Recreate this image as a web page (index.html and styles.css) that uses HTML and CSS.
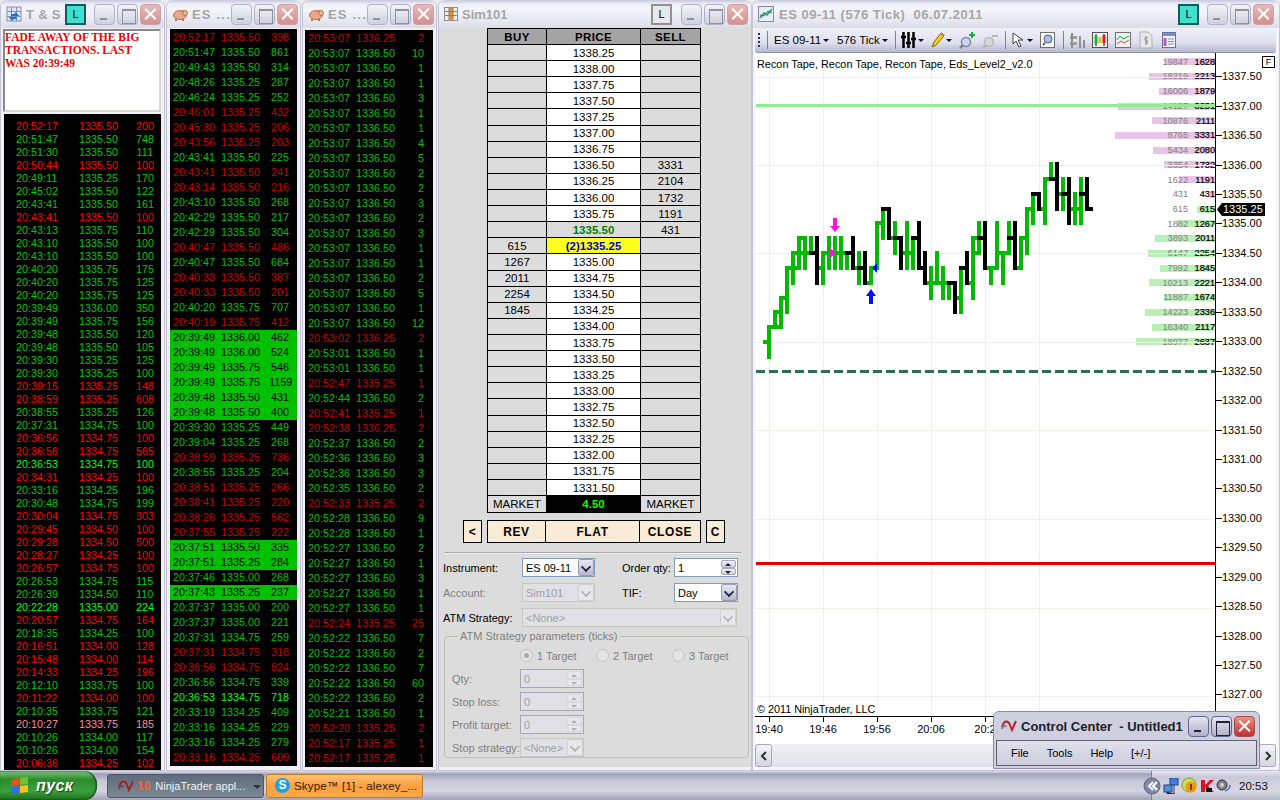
FILE: index.html
```html
<!DOCTYPE html>
<html lang="en">
<head>
<meta charset="utf-8">
<title>NinjaTrader workspace</title>
<link rel="stylesheet" href="styles.css">
</head>
<body>
<main class="desktop">

<section class="win w1">
  <header class="tbar">
    <svg class="wicon" viewBox="0 0 16 16"><rect x="1" y="1" width="14" height="14" fill="#dfe6f4" stroke="#8090b8"/><path d="M1 5.500H15M1 10.500H15M5.500 1V15M10.500 1V15" stroke="#8090b8"/><path d="M5 9H11L9 7M11 12H5L7 14" stroke="#2070e0" stroke-width="2" fill="none"/></svg>
    <span class="ttl tsn">T &amp; S</span>
    <span class="lbtn cy">L</span>
    <span class="wbs"><i class="bt mn"></i><i class="bt mx"></i><i class="bt cl"></i></span>
  </header>
  <div class="memo">FADE AWAY OF THE BIG TRANSACTIONS. LAST WAS 20:39:49</div>
  <div class="tape t1">
    <p class="r"><b>20:52:17</b><b>1335.50</b><b>200</b></p>
    <p class="g"><b>20:51:47</b><b>1335.50</b><b>748</b></p>
    <p class="g"><b>20:51:30</b><b>1335.50</b><b>111</b></p>
    <p class="r"><b>20:50:44</b><b>1335.50</b><b>100</b></p>
    <p class="g"><b>20:49:11</b><b>1335.25</b><b>170</b></p>
    <p class="g"><b>20:45:02</b><b>1335.50</b><b>122</b></p>
    <p class="g"><b>20:43:41</b><b>1335.50</b><b>161</b></p>
    <p class="r"><b>20:43:41</b><b>1335.50</b><b>100</b></p>
    <p class="g"><b>20:43:13</b><b>1335.75</b><b>110</b></p>
    <p class="g"><b>20:43:10</b><b>1335.50</b><b>100</b></p>
    <p class="g"><b>20:43:10</b><b>1335.50</b><b>100</b></p>
    <p class="g"><b>20:40:20</b><b>1335.75</b><b>175</b></p>
    <p class="g"><b>20:40:20</b><b>1335.75</b><b>125</b></p>
    <p class="g"><b>20:40:20</b><b>1335.75</b><b>125</b></p>
    <p class="g"><b>20:39:49</b><b>1336.00</b><b>350</b></p>
    <p class="g"><b>20:39:49</b><b>1335.75</b><b>156</b></p>
    <p class="g"><b>20:39:48</b><b>1335.50</b><b>120</b></p>
    <p class="g"><b>20:39:48</b><b>1335.50</b><b>105</b></p>
    <p class="g"><b>20:39:30</b><b>1335.25</b><b>125</b></p>
    <p class="g"><b>20:39:30</b><b>1335.25</b><b>100</b></p>
    <p class="r"><b>20:39:15</b><b>1335.25</b><b>148</b></p>
    <p class="r"><b>20:38:59</b><b>1335.25</b><b>608</b></p>
    <p class="g"><b>20:38:55</b><b>1335.25</b><b>126</b></p>
    <p class="g"><b>20:37:31</b><b>1334.75</b><b>100</b></p>
    <p class="r"><b>20:36:56</b><b>1334.75</b><b>100</b></p>
    <p class="r"><b>20:36:56</b><b>1334.75</b><b>565</b></p>
    <p class="lg"><b>20:36:53</b><b>1334.75</b><b>100</b></p>
    <p class="r"><b>20:34:31</b><b>1334.25</b><b>100</b></p>
    <p class="g"><b>20:33:16</b><b>1334.25</b><b>196</b></p>
    <p class="g"><b>20:30:48</b><b>1334.75</b><b>199</b></p>
    <p class="r"><b>20:30:04</b><b>1334.75</b><b>303</b></p>
    <p class="r"><b>20:29:45</b><b>1334.50</b><b>100</b></p>
    <p class="r"><b>20:29:28</b><b>1334.50</b><b>500</b></p>
    <p class="r"><b>20:28:27</b><b>1334.25</b><b>100</b></p>
    <p class="r"><b>20:26:57</b><b>1334.75</b><b>100</b></p>
    <p class="g"><b>20:26:53</b><b>1334.75</b><b>115</b></p>
    <p class="g"><b>20:26:39</b><b>1334.50</b><b>110</b></p>
    <p class="lg"><b>20:22:28</b><b>1335.00</b><b>224</b></p>
    <p class="r"><b>20:20:57</b><b>1334.75</b><b>164</b></p>
    <p class="g"><b>20:18:35</b><b>1334.25</b><b>100</b></p>
    <p class="r"><b>20:16:51</b><b>1334.00</b><b>128</b></p>
    <p class="r"><b>20:15:48</b><b>1334.00</b><b>114</b></p>
    <p class="r"><b>20:14:33</b><b>1334.25</b><b>196</b></p>
    <p class="g"><b>20:12:10</b><b>1333.75</b><b>100</b></p>
    <p class="r"><b>20:11:22</b><b>1334.00</b><b>100</b></p>
    <p class="g"><b>20:10:35</b><b>1333.75</b><b>121</b></p>
    <p class="pk"><b>20:10:27</b><b>1333.75</b><b>185</b></p>
    <p class="g"><b>20:10:26</b><b>1334.00</b><b>117</b></p>
    <p class="g"><b>20:10:26</b><b>1334.00</b><b>154</b></p>
    <p class="r"><b>20:06:36</b><b>1334.25</b><b>102</b></p>
  </div>
</section>

<section class="win w2">
  <header class="tbar">
    <svg class="wicon" viewBox="0 0 16 16"><ellipse cx="8" cy="9" rx="6.500" ry="4.500" fill="#e8a888" stroke="#b87858"/><circle cx="13" cy="7" r="2.500" fill="#f0b898" stroke="#b87858"/><path d="M4 13V15M11 13V15" stroke="#b87858" stroke-width="2"/><path d="M10 4L12 6" stroke="#c06040"/></svg>
    <span class="ttl">ES ...</span>
    <span class="wbs"><i class="bt mn"></i><i class="bt mx"></i><i class="bt cl"></i></span>
  </header>
  <div class="tape t2">
    <p class="r"><b>20:52:17</b><b>1335.50</b><b>398</b></p>
    <p class="g"><b>20:51:47</b><b>1335.50</b><b>861</b></p>
    <p class="g"><b>20:49:43</b><b>1335.50</b><b>314</b></p>
    <p class="g"><b>20:48:26</b><b>1335.25</b><b>287</b></p>
    <p class="g"><b>20:46:24</b><b>1335.25</b><b>252</b></p>
    <p class="r"><b>20:46:01</b><b>1335.25</b><b>432</b></p>
    <p class="r"><b>20:45:30</b><b>1335.25</b><b>206</b></p>
    <p class="r"><b>20:43:56</b><b>1335.25</b><b>203</b></p>
    <p class="g"><b>20:43:41</b><b>1335.50</b><b>225</b></p>
    <p class="r"><b>20:43:41</b><b>1335.50</b><b>241</b></p>
    <p class="r"><b>20:43:14</b><b>1335.50</b><b>216</b></p>
    <p class="g"><b>20:43:10</b><b>1335.50</b><b>268</b></p>
    <p class="g"><b>20:42:29</b><b>1335.50</b><b>217</b></p>
    <p class="g"><b>20:42:29</b><b>1335.50</b><b>304</b></p>
    <p class="r"><b>20:40:47</b><b>1335.50</b><b>486</b></p>
    <p class="g"><b>20:40:47</b><b>1335.50</b><b>684</b></p>
    <p class="r"><b>20:40:33</b><b>1335.50</b><b>387</b></p>
    <p class="r"><b>20:40:33</b><b>1335.50</b><b>201</b></p>
    <p class="g"><b>20:40:20</b><b>1335.75</b><b>707</b></p>
    <p class="r"><b>20:40:19</b><b>1335.75</b><b>412</b></p>
    <p class="hl"><b>20:39:49</b><b>1336.00</b><b>462</b></p>
    <p class="hl"><b>20:39:49</b><b>1336.00</b><b>524</b></p>
    <p class="hl"><b>20:39:49</b><b>1335.75</b><b>546</b></p>
    <p class="hl"><b>20:39:49</b><b>1335.75</b><b>1159</b></p>
    <p class="hl"><b>20:39:48</b><b>1335.50</b><b>431</b></p>
    <p class="hl"><b>20:39:48</b><b>1335.50</b><b>400</b></p>
    <p class="g"><b>20:39:30</b><b>1335.25</b><b>449</b></p>
    <p class="g"><b>20:39:04</b><b>1335.25</b><b>268</b></p>
    <p class="r"><b>20:38:59</b><b>1335.25</b><b>736</b></p>
    <p class="g"><b>20:38:55</b><b>1335.25</b><b>204</b></p>
    <p class="r"><b>20:38:51</b><b>1335.25</b><b>266</b></p>
    <p class="r"><b>20:38:41</b><b>1335.25</b><b>220</b></p>
    <p class="r"><b>20:38:26</b><b>1335.25</b><b>562</b></p>
    <p class="r"><b>20:37:55</b><b>1335.25</b><b>222</b></p>
    <p class="hl"><b>20:37:51</b><b>1335.50</b><b>335</b></p>
    <p class="hl"><b>20:37:51</b><b>1335.25</b><b>284</b></p>
    <p class="g"><b>20:37:46</b><b>1335.00</b><b>268</b></p>
    <p class="hl"><b>20:37:43</b><b>1335.25</b><b>237</b></p>
    <p class="g"><b>20:37:37</b><b>1335.00</b><b>200</b></p>
    <p class="g"><b>20:37:37</b><b>1335.00</b><b>221</b></p>
    <p class="g"><b>20:37:31</b><b>1334.75</b><b>259</b></p>
    <p class="r"><b>20:37:31</b><b>1334.75</b><b>318</b></p>
    <p class="r"><b>20:36:56</b><b>1334.75</b><b>824</b></p>
    <p class="g"><b>20:36:56</b><b>1334.75</b><b>339</b></p>
    <p class="lg"><b>20:36:53</b><b>1334.75</b><b>718</b></p>
    <p class="g"><b>20:33:19</b><b>1334.25</b><b>409</b></p>
    <p class="g"><b>20:33:16</b><b>1334.25</b><b>229</b></p>
    <p class="g"><b>20:33:16</b><b>1334.25</b><b>279</b></p>
    <p class="r"><b>20:33:16</b><b>1334.25</b><b>609</b></p>
  </div>
</section>

<section class="win w3">
  <header class="tbar">
    <svg class="wicon" viewBox="0 0 16 16"><ellipse cx="8" cy="9" rx="6.500" ry="4.500" fill="#e8a888" stroke="#b87858"/><circle cx="13" cy="7" r="2.500" fill="#f0b898" stroke="#b87858"/><path d="M4 13V15M11 13V15" stroke="#b87858" stroke-width="2"/><path d="M10 4L12 6" stroke="#c06040"/></svg>
    <span class="ttl">ES ...</span>
    <span class="wbs"><i class="bt mn"></i><i class="bt mx"></i><i class="bt cl"></i></span>
  </header>
  <div class="tape t3">
    <p class="r"><b>20:53:07</b><b>1336.25</b><b>2</b></p>
    <p class="g"><b>20:53:07</b><b>1336.50</b><b>10</b></p>
    <p class="g"><b>20:53:07</b><b>1336.50</b><b>1</b></p>
    <p class="g"><b>20:53:07</b><b>1336.50</b><b>1</b></p>
    <p class="g"><b>20:53:07</b><b>1336.50</b><b>3</b></p>
    <p class="g"><b>20:53:07</b><b>1336.50</b><b>1</b></p>
    <p class="g"><b>20:53:07</b><b>1336.50</b><b>1</b></p>
    <p class="g"><b>20:53:07</b><b>1336.50</b><b>4</b></p>
    <p class="g"><b>20:53:07</b><b>1336.50</b><b>5</b></p>
    <p class="g"><b>20:53:07</b><b>1336.50</b><b>2</b></p>
    <p class="g"><b>20:53:07</b><b>1336.50</b><b>2</b></p>
    <p class="g"><b>20:53:07</b><b>1336.50</b><b>3</b></p>
    <p class="g"><b>20:53:07</b><b>1336.50</b><b>2</b></p>
    <p class="g"><b>20:53:07</b><b>1336.50</b><b>3</b></p>
    <p class="g"><b>20:53:07</b><b>1336.50</b><b>1</b></p>
    <p class="g"><b>20:53:07</b><b>1336.50</b><b>1</b></p>
    <p class="g"><b>20:53:07</b><b>1336.50</b><b>2</b></p>
    <p class="g"><b>20:53:07</b><b>1336.50</b><b>5</b></p>
    <p class="g"><b>20:53:07</b><b>1336.50</b><b>1</b></p>
    <p class="g"><b>20:53:07</b><b>1336.50</b><b>12</b></p>
    <p class="r"><b>20:53:02</b><b>1336.25</b><b>2</b></p>
    <p class="g"><b>20:53:01</b><b>1336.50</b><b>1</b></p>
    <p class="g"><b>20:53:01</b><b>1336.50</b><b>1</b></p>
    <p class="r"><b>20:52:47</b><b>1335.25</b><b>1</b></p>
    <p class="g"><b>20:52:44</b><b>1336.50</b><b>2</b></p>
    <p class="r"><b>20:52:41</b><b>1335.25</b><b>1</b></p>
    <p class="r"><b>20:52:38</b><b>1336.25</b><b>2</b></p>
    <p class="g"><b>20:52:37</b><b>1336.50</b><b>2</b></p>
    <p class="g"><b>20:52:36</b><b>1336.50</b><b>3</b></p>
    <p class="g"><b>20:52:36</b><b>1336.50</b><b>3</b></p>
    <p class="g"><b>20:52:35</b><b>1336.50</b><b>2</b></p>
    <p class="r"><b>20:52:33</b><b>1335.25</b><b>2</b></p>
    <p class="g"><b>20:52:28</b><b>1336.50</b><b>9</b></p>
    <p class="g"><b>20:52:28</b><b>1336.50</b><b>1</b></p>
    <p class="g"><b>20:52:27</b><b>1336.50</b><b>2</b></p>
    <p class="g"><b>20:52:27</b><b>1336.50</b><b>1</b></p>
    <p class="g"><b>20:52:27</b><b>1336.50</b><b>3</b></p>
    <p class="g"><b>20:52:27</b><b>1336.50</b><b>1</b></p>
    <p class="g"><b>20:52:27</b><b>1336.50</b><b>1</b></p>
    <p class="r"><b>20:52:24</b><b>1335.25</b><b>25</b></p>
    <p class="g"><b>20:52:22</b><b>1336.50</b><b>7</b></p>
    <p class="g"><b>20:52:22</b><b>1336.50</b><b>2</b></p>
    <p class="g"><b>20:52:22</b><b>1336.50</b><b>7</b></p>
    <p class="g"><b>20:52:22</b><b>1336.50</b><b>60</b></p>
    <p class="g"><b>20:52:22</b><b>1336.50</b><b>2</b></p>
    <p class="g"><b>20:52:21</b><b>1336.50</b><b>1</b></p>
    <p class="r"><b>20:52:20</b><b>1335.25</b><b>2</b></p>
    <p class="r"><b>20:52:17</b><b>1335.25</b><b>1</b></p>
    <p class="r"><b>20:52:17</b><b>1335.25</b><b>1</b></p>
  </div>
</section>

<section class="win w4">
  <header class="tbar">
    <svg class="wicon sim" viewBox="0 0 14 14"><rect x="0.500" y="0.500" width="13" height="13" fill="#eee" stroke="#909090"/><rect x="5" y="1" width="4" height="12" fill="#f09020"/><path d="M1 4.500H13M1 8.500H13M5 1V13M9 1V13" stroke="#808080"/></svg>
    <span class="ttl simt">Sim101</span>
    <span class="lbtn gy">L</span>
    <span class="wbs"><i class="bt mn"></i><i class="bt mx"></i><i class="bt cl"></i></span>
  </header>
  <div class="dombody">
    <div class="dom">
      <div class="hd">BUY</div><div class="hd">PRICE</div><div class="hd">SELL</div>
      <div></div><div class="p">1338.25</div><div></div>
      <div></div><div class="p">1338.00</div><div></div>
      <div></div><div class="p">1337.75</div><div></div>
      <div></div><div class="p">1337.50</div><div></div>
      <div></div><div class="p">1337.25</div><div></div>
      <div></div><div class="p">1337.00</div><div></div>
      <div></div><div class="p">1336.75</div><div></div>
      <div></div><div class="p">1336.50</div><div>3331</div>
      <div></div><div class="p">1336.25</div><div>2104</div>
      <div></div><div class="p">1336.00</div><div>1732</div>
      <div></div><div class="p">1335.75</div><div>1191</div>
      <div></div><div class="p last">1335.50</div><div>431</div>
      <div>615</div><div class="p cur">(2)1335.25</div><div></div>
      <div>1267</div><div class="p">1335.00</div><div></div>
      <div>2011</div><div class="p">1334.75</div><div></div>
      <div>2254</div><div class="p">1334.50</div><div></div>
      <div>1845</div><div class="p">1334.25</div><div></div>
      <div></div><div class="p">1334.00</div><div></div>
      <div></div><div class="p">1333.75</div><div></div>
      <div></div><div class="p">1333.50</div><div></div>
      <div></div><div class="p">1333.25</div><div></div>
      <div></div><div class="p">1333.00</div><div></div>
      <div></div><div class="p">1332.75</div><div></div>
      <div></div><div class="p">1332.50</div><div></div>
      <div></div><div class="p">1332.25</div><div></div>
      <div></div><div class="p">1332.00</div><div></div>
      <div></div><div class="p">1331.75</div><div></div>
      <div></div><div class="p">1331.50</div><div></div>
      <div class="mk">MARKET</div><div class="pnl">4.50</div><div class="mk">MARKET</div>
    </div>
    <div class="actions">
      <span class="act sm">&lt;</span>
      <div class="actg"><span class="act">REV</span><span class="act">FLAT</span><span class="act">CLOSE</span></div>
      <span class="act sm">C</span>
    </div>
    <hr class="sep">
    <div class="frow">
      <label class="l1">Instrument:</label>
      <span class="combo act-c c1"><em>ES 09-11</em><i class="dd"></i></span>
      <label class="l2">Order qty:</label>
      <span class="spin on s1"><em>1</em><i class="sb"><u></u><u class="dn"></u></i></span>
    </div>
    <div class="frow">
      <label class="l1 off">Account:</label>
      <span class="combo dis c1"><em>Sim101</em><i class="dd"></i></span>
      <label class="l2">TIF:</label>
      <span class="combo act-c s1"><em>Day</em><i class="dd"></i></span>
    </div>
    <div class="frow">
      <label class="l1">ATM Strategy:</label>
      <span class="combo dis c3"><em>&lt;None&gt;</em><i class="dd"></i></span>
    </div>
    <fieldset class="grp">
      <legend>ATM Strategy parameters (ticks)</legend>
      <div class="radios">
        <span class="rad"><i class="dot chk"></i>1 Target</span>
        <span class="rad"><i class="dot"></i>2 Target</span>
        <span class="rad"><i class="dot"></i>3 Target</span>
      </div>
      <div class="prow"><label>Qty:</label><span class="spin dis s2"><em>0</em><i class="sb"><u></u><u class="dn"></u></i></span></div>
      <div class="prow"><label>Stop loss:</label><span class="spin dis s2"><em>0</em><i class="sb"><u></u><u class="dn"></u></i></span></div>
      <div class="prow"><label>Profit target:</label><span class="spin dis s2"><em>0</em><i class="sb"><u></u><u class="dn"></u></i></span></div>
      <div class="prow"><label>Stop strategy:</label><span class="combo dis s2"><em>&lt;None&gt;</em><i class="dd"></i></span></div>
    </fieldset>
  </div>
</section>

<section class="win w5">
  <header class="tbar">
    <svg class="wicon" viewBox="0 0 16 16"><rect x="0.500" y="0.500" width="15" height="15" fill="#e8ecf8" stroke="#8888a8"/><path d="M2 12L6 7L9 9L14 3" stroke="#20a040" stroke-width="1.500" fill="none"/><path d="M2 9L6 10L10 5L14 7" stroke="#2060e0" fill="none"/></svg>
    <span class="ttl cht">ES 09-11 (576 Tick)&nbsp; 06.07.2011</span>
    <span class="lbtn cy">L</span>
    <span class="wbs"><i class="bt mn"></i><i class="bt mx"></i><i class="bt cl"></i></span>
  </header>
  <nav class="tools">
    <i class="grip m3"></i><i class="vs m7"></i>
    <span class="ti t-a m6">ES 09-11</span><i class="ar m7"></i>
    <span class="ti t-b m8">576 Tick</span><i class="ar m5"></i><i class="vs m7"></i>
    <svg class="ic m5" width="15" height="18" viewBox="0 0 15 18"><path d="M2.500 1V17M7.500 1V17M12.500 1V17M0 6H5M5 12H10M10 8H15" stroke="#000" stroke-width="2.500" fill="none"/></svg><i class="ar m2"></i>
    <svg class="ic m7" width="14" height="18" viewBox="0 0 14 18"><path d="M1 16L3 11L10 2L13 5L5 14Z" fill="#f0d020" stroke="#806000"/><path d="M10 2L13 5" stroke="#e06060" stroke-width="2"/></svg><i class="ar m1"></i>
    <svg class="ic m7" width="17" height="18" viewBox="0 0 17 18"><circle cx="7" cy="11" r="4.500" fill="#c8d4f0" stroke="#808890" stroke-width="1.500"/><path d="M4 14L1 17" stroke="#808890" stroke-width="3"/><path d="M13 1V7M10 4H16" stroke="#10b030" stroke-width="2"/></svg>
    <svg class="ic m6" width="16" height="18" viewBox="0 0 16 18"><circle cx="7" cy="11" r="4.500" fill="#d8d8d8" stroke="#b8b8b8" stroke-width="1.500"/><path d="M4 14L1 17" stroke="#b8b8b8" stroke-width="3"/><path d="M10 5H16" stroke="#b8b8b8" stroke-width="2"/></svg><i class="vs m7"></i>
    <svg class="ic m6" width="13" height="18" viewBox="0 0 13 18"><path d="M1 2V13L4 10L7 16L9 15L6 9L11 9Z" fill="#fff" stroke="#404040"/></svg><i class="ar m2"></i>
    <svg class="ic m7" width="15" height="18" viewBox="0 0 15 18"><rect x="0.500" y="1.500" width="14" height="15" fill="#f8f8f8" stroke="#707070"/><circle cx="8" cy="8" r="4" fill="#a0c0f0" stroke="#606060"/><path d="M5 12L3 14" stroke="#606060" stroke-width="2"/></svg><i class="vs m8"></i>
    <svg class="ic m5" width="16" height="18" viewBox="0 0 16 18"><path d="M1 5H8V8H1ZM1 11H8V14H1Z" fill="#a0a0a0"/><path d="M3 2V17M11 5V17M15 9V17" stroke="#909090" stroke-width="2"/></svg>
    <svg class="ic m7" width="16" height="18" viewBox="0 0 16 18"><rect x="0.500" y="1.500" width="15" height="15" fill="#f0f0f0" stroke="#505050"/><path d="M4 3V15M12 3V15" stroke="#101010"/><rect x="2.500" y="5" width="3" height="8" fill="#20b040"/><rect x="10.500" y="4" width="3" height="8" fill="#e02020"/><rect x="6.500" y="6" width="3" height="6" fill="#e0c020"/></svg>
    <svg class="ic m7" width="16" height="18" viewBox="0 0 16 18"><rect x="0.500" y="1.500" width="15" height="15" fill="#f0f0f0" stroke="#707070"/><path d="M2 9L5 5L8 8L14 5" stroke="#20a040" fill="none"/><path d="M2 13L6 10L9 12L14 9" stroke="#e04040" fill="none"/></svg>
    <svg class="ic m8" width="14" height="18" viewBox="0 0 14 18"><path d="M1 1H9L13 5V17H1Z" fill="#e8e8e8" stroke="#b0b0b0"/><path d="M9 7C6 6 5 9 7 9.500C9 10 9 13 6 12M7 5V14" stroke="#a0a0a0" stroke-width="1.500" fill="none"/></svg>
    <svg class="ic m9" width="14" height="18" viewBox="0 0 14 18"><rect x="0.500" y="1.500" width="13" height="15" fill="#f0f0ff" stroke="#7070a0"/><rect x="1" y="2" width="12" height="3" fill="#7090d0"/><path d="M3 7V15" stroke="#b060c0" stroke-width="3"/><path d="M6 8H12M6 10.500H12M6 13H12" stroke="#9090a0"/></svg>
  </nav>
  <div class="chart">
    <div class="plot">
      <div class="ladder">
        <div class="lr"><s class="ask" style="width:50px"></s><span>19847</span><b>1628</b></div>
        <div class="lr"><s class="ask" style="width:66px"></s><span>18219</span><b>2213</b></div>
        <div class="lr"><s class="ask" style="width:56px"></s><span>16006</span><b>1879</b></div>
        <div class="lr"><s class="ask" style="width:97px"></s><span>14127</span><b>3251</b></div>
        <div class="lr"><s class="ask" style="width:63px"></s><span>10876</span><b>2111</b></div>
        <div class="lr"><s class="ask" style="width:100px"></s><span>8765</span><b>3331</b></div>
        <div class="lr"><s class="ask" style="width:62px"></s><span>5434</span><b>2080</b></div>
        <div class="lr"><s class="ask" style="width:51px"></s><span>3354</span><b>1732</b></div>
        <div class="lr"><s class="ask" style="width:36px"></s><span>1622</span><b>1191</b></div>
        <div class="lr"><s class="ask" style="width:5px"></s><span>431</span><b>431</b></div>
        <div class="lr"><s class="bid" style="width:18px"></s><span>615</span><b>615</b></div>
        <div class="lr"><s class="bid" style="width:38px"></s><span>1882</span><b>1267</b></div>
        <div class="lr"><s class="bid" style="width:60px"></s><span>3893</span><b>2011</b></div>
        <div class="lr"><s class="bid" style="width:67px"></s><span>6147</span><b>2254</b></div>
        <div class="lr"><s class="bid" style="width:55px"></s><span>7992</span><b>1845</b></div>
        <div class="lr"><s class="bid" style="width:66px"></s><span>10213</span><b>2221</b></div>
        <div class="lr"><s class="bid" style="width:51px"></s><span>11887</span><b>1674</b></div>
        <div class="lr"><s class="bid" style="width:70px"></s><span>14223</span><b>2336</b></div>
        <div class="lr"><s class="bid" style="width:63px"></s><span>16340</span><b>2117</b></div>
        <div class="lr"><s class="bid" style="width:79px"></s><span>18977</span><b>2637</b></div>
      </div>
      <svg class="canvas" width="460" height="663" viewBox="0 0 460 663">
        <g class="grid" stroke="#f0f0e4">
          <path d="M0 24.500H460M0 112.500H460M0 200.500H460M0 289.500H460M0 377.500H460M0 466.500H460M0 555.500H460M0 643.500H460"/>
          <path d="M14.500 8V663M68.500 8V663M122.500 8V663M176.500 8V663M230.500 8V663M284.500 8V663"/>
        </g>
        <rect x="1" y="51" width="459" height="3" fill="#90ee90"/>
        <path d="M1 318.500H460" stroke="#2e6e50" stroke-width="3" stroke-dasharray="9 4"/>
        <rect x="1" y="509" width="459" height="3" fill="#e00000"/>
        <g transform="translate(-5 98) scale(.33333)" stroke-width="12" fill="none" stroke-linecap="square" shape-rendering="crispEdges">
          <path stroke="#00bb00" d="M57 528V617M75 484V528M93 440V528M111 350V484M129 306V395M147 262V350M165 262V350M183 262V306M219 306V395M237 262V350M255 262V350M273 262V350M291 306V350M327 306V395M363 350V395M381 217V350M399 173V262M435 217V306M471 217V350M489 262V350M543 350V440M561 306V395M579 350V440M597 395V440M633 350V484M669 262V440M687 217V306M723 350V395M741 217V350M759 306V395M777 217V306M813 262V350M831 173V306M849 128V217M885 84V217M903 40V84M939 84V173M975 128V217M993 84V217"/>
          <path stroke="#00bb00" d="M46 573H57M57 528H93M75 484H93M93 440H111M111 350H147M129 306H183M147 262H165M201 350H219M219 306H291M309 350H327M345 395H363M363 350H381M381 217H399M417 262H435M453 306H489M525 395H597M615 440H633M651 395H669M669 306H687M669 262H687M705 350H741M741 306H777M795 350H813M813 262H831M831 173H849M867 173H885M885 84H903M921 128H939M957 173H993"/>
          <path stroke="#000" d="M201 262V395M309 262V350M345 306V395M417 173V262M453 262V350M507 217V350M525 306V395M615 395V484M651 306V395M705 217V350M795 217V350M867 128V173M921 40V173M957 84V217M1011 84V173"/>
          <path stroke="#000" d="M183 306H201M291 306H309M327 350H345M399 173H417M435 262H453M489 262H507M507 350H525M597 395H615M633 350H651M687 262H705M777 262H795M849 128H867M903 84H921M939 128H957M993 128H1011M1011 173H1023"/>
        </g>
        <path d="M78 165H82V173H85L80 179L75 173H78Z" fill="#ff10e0"/>
        <path d="M114 251H118V243H121L116 236L111 243H114Z" fill="#0010ff"/>
        <path d="M75 195L81 200L75 205Z" fill="#ff10e0"/>
        <path d="M122 210L117 215L122 220Z" fill="#0010e0"/>
      </svg>
      <div class="ctitle">Recon Tape, Recon Tape, Recon Tape, Eds_Level2_v2.0</div>
      <div class="copy">© 2011 NinjaTrader, LLC</div>
    </div>
    <div class="yaxis">
      <span class="fbox">F</span>
      <div class="yl">1337.50</div><div class="yl">1337.00</div><div class="yl">1336.50</div><div class="yl">1336.00</div>
      <div class="yl">1335.50</div><div class="yl">1335.00</div><div class="yl">1334.50</div><div class="yl">1334.00</div>
      <div class="yl">1333.50</div><div class="yl">1333.00</div><div class="yl">1332.50</div><div class="yl">1332.00</div>
      <div class="yl">1331.50</div><div class="yl">1331.00</div><div class="yl">1330.50</div><div class="yl">1330.00</div>
      <div class="yl">1329.50</div><div class="yl">1329.00</div><div class="yl">1328.50</div><div class="yl">1328.00</div>
      <div class="yl">1327.50</div><div class="yl">1327.00</div>
      <span class="cur-flag">1335.25</span>
    </div>
  </div>
  <div class="xaxis"><span>19:40</span><span>19:46</span><span>19:56</span><span>20:06</span><span>20:2</span></div>
  <div class="hscroll"><span class="sb-l"><svg width="8" height="10" viewBox="0 0 8 10"><path d="M6 1L2 5L6 9" stroke="#303030" stroke-width="2" fill="none"/></svg></span><span class="sb-r"><svg width="8" height="10" viewBox="0 0 8 10"><path d="M2 1L6 5L2 9" stroke="#303030" stroke-width="2" fill="none"/></svg></span></div>
</section>

<section class="cc">
  <header class="cc-bar">
    <svg class="cc-ic" width="16" height="14" viewBox="0 0 16 14"><path d="M1 8C3 1 7 1 9 6L11 11L15 2" fill="none" stroke="#c02020" stroke-width="2"/><path d="M1 10C2 6 4 6 5 8" fill="none" stroke="#808080" stroke-width="2"/></svg>
    <span class="cc-t">Control Center&nbsp; - Untitled1</span>
    <span class="wbs"><i class="bt mn act-b"></i><i class="bt mx act-b"></i><i class="bt cl act-c2"></i></span>
  </header>
  <nav class="cc-menu"><span>File</span><span>Tools</span><span>Help</span><span>[+/-]</span></nav>
</section>

<footer class="taskbar">
  <span class="start">
    <svg width="20" height="20" viewBox="0 0 20 20"><path d="M2 4L9 2V9L1 10Z" fill="#e85020"/><path d="M10 2L18 1V8L10 9Z" fill="#70c030"/><path d="M1 11L9 10V17L2 18Z" fill="#3070e0"/><path d="M10 10L18 9V16L10 17Z" fill="#f8c020"/></svg>
    <em>пуск</em>
  </span>
  <span class="task nt">
    <svg width="16" height="14" viewBox="0 0 16 14"><path d="M1 8C3 1 7 1 9 6L11 11L15 2" fill="none" stroke="#a82020" stroke-width="2"/><path d="M1 10C2 6 4 6 5 8" fill="none" stroke="#505058" stroke-width="2"/></svg>
    <b>10</b><span>NinjaTrader appl...</span><i class="tri"></i>
  </span>
  <span class="task sk">
    <span class="skype">S</span><span>Skype™ [1] - alexey_...</span>
  </span>
  <span class="tray">
    <svg class="back" width="18" height="18" viewBox="0 0 18 18"><circle cx="9" cy="9" r="8" fill="#8088a8" stroke="#606480"/><path d="M10 5L6 9L10 13M14 5L10 9L14 13" stroke="#fff" stroke-width="2" fill="none"/></svg>
    <svg width="16" height="16" viewBox="0 0 16 16"><rect x="7" y="0" width="8" height="7" fill="#4080e0" stroke="#204080"/><rect x="1" y="7" width="8" height="7" fill="#5090e8" stroke="#204080"/><path d="M4 14V16H12M11 7V16" stroke="#404040"/></svg>
    <svg width="17" height="17" viewBox="0 0 17 17"><circle cx="8" cy="8" r="7" fill="#c8e060" stroke="#80a020"/><circle cx="10" cy="10" r="5.500" fill="#f09810"/><path d="M10 7V13" stroke="#402000" stroke-width="1.500"/></svg>
    <svg width="14" height="14" viewBox="0 0 14 14"><path d="M1 1H5V6L10 1H14L8 7L14 13H10L5 8V13H1Z" fill="#e01020"/><rect x="6" y="9" width="6" height="4" fill="#181818"/></svg>
    <svg width="16" height="16" viewBox="0 0 16 16"><circle cx="6" cy="7" r="5" fill="#808088" stroke="#303038"/><circle cx="6" cy="7" r="2" fill="#d0d0d8"/><path d="M9 13C12 12 14 10 14 7" stroke="#4070d0" fill="none" stroke-width="1.500"/></svg>
    <time>20:53</time>
  </span>
</footer>
</main>
</body>
</html>
```

FILE: styles.css
```css
* { box-sizing: border-box; }
html, body { margin: 0; padding: 0; }
body { width: 1280px; height: 800px; overflow: hidden; font-family: "Liberation Sans", Arial, sans-serif; font-size: 11px; color: #000; }
.desktop { position: relative; width: 1280px; height: 800px; background: #eaeaf2; overflow: hidden; }

/* windows */
.win { position: absolute; top: 0; height: 771px; display: flex; flex-direction: column; background: #f0f0f6; border: 1px solid #c4c4d4; border-top: 0; border-radius: 7px 7px 0 0; padding: 0 3px; }
.w1 { left: 0; width: 165px; }
.w2 { left: 166px; width: 135px; }
.w3 { left: 302px; width: 135px; }
.w4 { left: 438px; width: 314px; padding-bottom: 3px; }
.w5 { left: 752px; width: 528px; padding: 0 3px 3px 2px; background: #f4f4f8; }

.tbar { flex: none; height: 28px; display: flex; align-items: center; margin: 0 -3px; padding: 0 3px 0 5px; background: linear-gradient(#c8c8dc 0, #eeeef6 4px, #f4f4fa 10px, #e6e6f0 22px, #dcdce8 28px); border-radius: 7px 7px 0 0; }
.w2 .tbar, .w3 .tbar { padding-right: 5px; }
.w5 .tbar { margin: 0 -3px 0 -2px; padding-right: 5px; }
.wicon { width: 16px; height: 16px; flex: none; }
.ttl { margin-left: 4px; font-weight: bold; font-size: 13px; color: #a6a6a6; letter-spacing: 1.2px; white-space: nowrap; }
.tsn { letter-spacing: .3px; }
.simt { margin-left: 4px; font-size: 13px; letter-spacing: 0; }
.cht { font-size: 13px; margin-left: 5px; letter-spacing: .5px; }
.wicon.sim { width: 14px; height: 14px; }
.lbtn { flex: none; width: 21px; height: 21px; margin-left: auto; display: flex; align-items: center; justify-content: center; font-size: 11px; border: 2px solid; }
.lbtn.cy { background: #40e0d0; border-color: #0c5c5c; }
.lbtn.gy { background: #e8e8e8; border-color: #909090; margin-right: 9px; }
.w1 .lbtn, .w5 .lbtn { margin-right: 8px; }
.wbs { display: flex; gap: 2px; flex: none; }
.w2 .wbs, .w3 .wbs { margin-left: auto; }
.bt { position: relative; display: block; width: 21px; height: 21px; border: 1px solid #b0b0c8; border-radius: 4px; background: linear-gradient(#f4f4fa, #d0d0de); }
.bt.mn::after { content: ""; position: absolute; left: 5px; bottom: 4px; width: 7px; height: 2px; background: #9090a0; }
.bt.mx::after { content: ""; position: absolute; left: 4px; top: 4px; width: 12px; height: 12px; border: 1px solid #9090a0; border-top-width: 2px; }
.bt.cl { background: linear-gradient(#eab8b8, #d49090); border-color: #c8a0a8; }
.bt.cl::before, .bt.cl::after { content: ""; position: absolute; left: 2px; top: 8px; width: 15px; height: 2px; background: #fff; transform: rotate(45deg); }
.bt.cl::after { transform: rotate(-45deg); }

/* T&S tape */
.memo { flex: none; height: 83px; margin: 1px 0 0 -1px; padding: 0; background: #fff; border: 2px solid; border-color: #8a8a8a #d8d8d0 #d8d8d0 #8a8a8a; color: #f00000; font: bold 11.500px/13px "Liberation Serif", "Times New Roman", serif; }
.tape { flex: 1; min-height: 0; background: #000; }
.tape p { display: grid; margin: 0; white-space: nowrap; }
.tape b { font-weight: normal; font-size: 10.800px; }
.tape b:last-child { text-align: right; }
.t1 { margin-top: 2px; padding: 6px 8px 0 12px; }
.t1 p { grid-template-columns: 63px 57px 1fr; height: 13px; line-height: 13px; }
.t2 { margin: 1px 0 4px; padding: 1px 8px 0 3px; }
.t2 p { grid-template-columns: 48px 48px 1fr; height: 15px; line-height: 15px; margin: 0 -8px 0 -3px; padding: 0 8px 0 3px; }
.t3 { margin: 2px 0 3px -1px; padding: 1px 9px 0 3px; }
.t3 p { grid-template-columns: 48px 48px 1fr; height: 15px; line-height: 15px; }
.t1 .r { color: #ff0000; }
.t1 .g { color: #00c800; }
.t2 .r, .t3 .r { color: #c80000; }
.t2 .g, .t3 .g { color: #00c000; }
.lg { color: #00ff00; }
.pk { color: #ff9090; }
.hl { background: #00c000; color: #000; }

/* DOM */
.dombody { flex: 1; min-height: 0; background: #dcdcdc; margin: 0 -3px; padding: 0 3px; display: flex; flex-direction: column; }
.dom { flex: none; margin-left: 45px; width: 214px; display: grid; grid-template-columns: 59px 94px 60px; grid-template-rows: 16px repeat(28, 16.110px) 17px; border: 1px solid #000; border-width: 1px 0 0 1px; font-size: 11.500px; }
.dom > div { display: flex; align-items: center; justify-content: center; border-right: 1px solid #000; border-bottom: 1px solid #000; background: #dcdcdc; white-space: nowrap; overflow: hidden; }
.dom > .hd { background: #a4a4a4; font-weight: bold; letter-spacing: .4px; }
.dom > .p { background: #fff; }
.dom > .last { color: #008000; font-weight: bold; background: #dcdcdc; }
.dom > .cur { background: #ffff20; color: #0000c0; font-weight: bold; }
.dom > .pnl { background: #000; color: #00ff00; font-weight: bold; }
.actions { flex: none; display: flex; align-items: stretch; height: 23px; margin: 7px 0 0 21px; }
.actg { display: grid; grid-template-columns: 58px 94px 60px; width: 214px; margin: 0 5px; border: 1px solid #000; background: #faebd7; }
.act { display: flex; align-items: center; justify-content: center; font-weight: bold; font-size: 12px; letter-spacing: .6px; border-right: 1px solid #000; background: #faebd7; }
.actg .act:last-child { border-right: 0; }
.act.sm { width: 19px; border: 1px solid #000; }
.sep { width: 297px; margin: 9px 0 4px 3px; height: 2px; border: 0; background: linear-gradient(#a8a8a8 50%, #f0f0f0 50%); }

/* order form */
.frow { flex: none; display: flex; align-items: center; height: 19px; margin: 0 0 6px 1px; }
.l1 { width: 79px; flex: none; }
.l2 { width: 52px; margin-left: 27px; flex: none; }
.off { color: #808080; }
.combo, .spin { position: relative; display: flex; align-items: center; height: 19px; border: 1px solid #7f9db9; background: #fff; padding-left: 3px; flex: none; }
.combo em, .spin em { font-style: normal; font-size: 11px; }
.c1 { width: 73px; }
.s1 { width: 64px; }
.c3 { width: 215px; }
.s2 { width: 64px; }
.dd { position: absolute; right: 0; top: 0; bottom: 0; width: 16px; background: linear-gradient(#e8e8f4, #b8b8cc); border: 1px solid #9c9cb4; border-radius: 2px; }
.dd::after { content: ""; position: absolute; left: 3px; top: 3px; width: 6px; height: 6px; border: solid #202040; border-width: 0 2px 2px 0; transform: rotate(45deg) scale(.9); }
.dis { background: #e0e0e6; border-color: #c8c8c0; color: #a0a0a0; }
.spin.dis { border-color: #a8a8b0; }
.dis .dd { background: #e8e8ec; border-color: #d0d0d0; }
.dis .dd::after { border-color: #b4b4b4; }
.sb { position: absolute; right: 1px; top: 1px; bottom: 1px; width: 15px; display: flex; flex-direction: column; }
.sb u { position: relative; flex: 1; display: block; background: linear-gradient(#f0f0f6, #d0d0dc); border: 1px solid #a8a8bc; border-radius: 2px; }
.sb u::after { content: ""; position: absolute; left: 3px; top: 2px; border: 3px solid transparent; border-top-width: 0; border-bottom: 3px solid #202040; }
.sb u.dn::after { border-bottom: 0; border-top: 3px solid #202040; border-left: 3px solid transparent; }
.dis .sb u { border-color: #d8d8d8; background: #e8e8ec; }
.dis .sb u::after { border-bottom-color: #b0b0b0; }
.dis .sb u.dn::after { border-top-color: #b0b0b0; }

.grp { position: relative; flex: none; width: 300px; height: 127px; margin: -2px 0 0 2px; padding: 4px 0 0 7px; border: 1px solid #bcbcb8; border-radius: 4px; color: #808080; }
.grp legend { padding: 0 2px; margin-left: 6px; font-size: 11px; line-height: 11px; height: 11px; }
.radios { display: flex; padding-left: 68px; height: 19px; align-items: center; }
.rad { display: flex; align-items: center; gap: 4px; width: 76px; }
.dot { position: relative; width: 13px; height: 13px; border: 1px solid #c4c4bc; border-radius: 50%; background: #e4e4e6; }
.dot.chk::after { content: ""; position: absolute; left: 3px; top: 3px; width: 5px; height: 5px; border-radius: 50%; background: #a8a8a8; }
.prow { display: flex; align-items: center; height: 19px; margin-top: 4px; }
.prow label { width: 68px; flex: none; }

/* chart */
.tools { flex: none; height: 25px; display: flex; align-items: center; padding-left: 0; background: linear-gradient(#f0f0f8, #e0e0ee 60%, #b8b8d0); border-radius: 3px; border-bottom: 1px solid #9090a8; }
.m1 { margin-left: 1px; }
.m2 { margin-left: 2px; }
.m3 { margin-left: 3px; }
.m5 { margin-left: 5px; }
.m6 { margin-left: 6px; }
.m7 { margin-left: 7px; }
.m8 { margin-left: 8px; }
.m9 { margin-left: 9px; }
.grip { width: 2px; height: 15px; background: repeating-linear-gradient(#303050 0 2px, transparent 2px 4px); flex: none; }
.vs { width: 1px; height: 18px; background: #808090; flex: none; }
.ti { font-size: 11.500px; white-space: nowrap; flex: none; }
.t-a { width: 42px; }
.t-b { width: 40px; }
.ar { width: 6px; height: 3px; border: 3px solid transparent; border-top: 3px solid #101020; border-bottom: 0; flex: none; }
.ic { flex: none; display: block; }
.chart { flex: 1; min-height: 0; display: flex; background: #fff; }
.plot { position: relative; width: 461px; flex: none; height: 100%; border-right: 1px solid #000; border-bottom: 1px solid #000; }
.canvas { position: absolute; left: 0; top: 0; }
.ladder { position: absolute; right: 0; top: 1.300px; width: 130px; }
.lr { position: relative; display: flex; justify-content: flex-end; align-items: center; height: 14.740px; font-size: 9.200px; padding-right: 0; }
.lr s { position: absolute; right: 0; top: 4px; height: 7px; }
.ask { background: #e8c4e8; }
.bid { background: #b8f0b8; }
.lr span { position: relative; color: #808080; width: 30px; text-align: right; }
.lr b { position: relative; font-weight: normal; color: #000; width: 27px; text-align: right; -webkit-text-stroke: .2px #000; }
.ctitle { position: absolute; left: 2px; top: 5px; font-size: 10.900px; line-height: 13px; white-space: nowrap; }
.copy { position: absolute; left: 2px; bottom: 0; font-size: 10.800px; line-height: 13px; white-space: nowrap; }
.yaxis { position: relative; flex: 1; padding-top: 9.300px; }
.yl { position: relative; height: 29.450px; line-height: 29.450px; padding-left: 6px; font-size: 11px; }
.yl::before { content: ""; position: absolute; left: 0; top: 14px; width: 6px; height: 1px; background: #000; }
.fbox { position: absolute; right: 1px; top: 3px; width: 13px; height: 12px; border: 1px solid #000; font-size: 9px; line-height: 10px; text-align: center; }
.cur-flag { position: absolute; left: 1px; top: 150px; width: 48px; height: 13px; background: #000; color: #fff; font-size: 11px; line-height: 13px; padding-left: 6px; clip-path: polygon(0 50%, 5px 0, 100% 0, 100% 100%, 5px 100%); }
.xaxis { flex: none; height: 27px; display: flex; background: #fff; }
.xaxis span { position: relative; flex: none; width: 54px; padding-top: 6px; text-align: center; font-size: 11px; line-height: 13px; }
.xaxis span:first-child { margin-left: -13px; }
.xaxis span::before { content: ""; position: absolute; left: 27px; top: 0; width: 1px; height: 5px; background: #000; }
.hscroll { flex: none; height: 23px; display: flex; justify-content: space-between; background: linear-gradient(#f0f0f6, #e0e0ea); }
.sb-l, .sb-r { width: 17px; display: flex; align-items: center; justify-content: center; background: linear-gradient(#f4f4fa, #d4d4e0); border: 1px solid #a8a8bc; border-radius: 3px; }

/* control center */
.cc { position: absolute; left: 993px; top: 711px; width: 267px; height: 58px; background: #cfcfe0; border: 1px solid #8888a8; border-radius: 6px 6px 0 0; padding: 0 2px 2px; display: flex; flex-direction: column; }
.cc-bar { flex: none; height: 28px; display: flex; align-items: center; padding: 0 0 0 5px; }
.cc-ic { flex: none; }
.cc-t { margin-left: 4px; font-weight: bold; font-size: 13px; color: #202028; white-space: nowrap; }
.cc .wbs { margin-left: auto; padding-right: 2px; }
.bt.act-b { border-color: #606890; background: linear-gradient(#e4e4f0, #b0b0c8); }
.bt.act-b::after { border-color: #202040; background: transparent; }
.bt.mn.act-b::after { background: #202040; }
.bt.act-c2 { background: linear-gradient(#f09080, #c03030); border-color: #a05050; }
.cc-menu { flex: 1; display: flex; align-items: center; padding-left: 14px; gap: 18px; background: linear-gradient(#e0e0ec, #ccccdc); border: 1px solid #606070; font-size: 11px; }

/* taskbar */
.taskbar { position: absolute; left: 0; bottom: 0; width: 1280px; height: 29px; display: flex; align-items: center; background: linear-gradient(#e0e0ee 0, #a0a0b8 3px, #c8c8d8 10px, #d4d4e2 20px, #a8a8bc 28px); }
.start { flex: none; width: 97px; height: 29px; display: flex; align-items: center; gap: 6px; padding-left: 10px; background: linear-gradient(#7cc47c, #2c8c2c 30%, #3ca03c 70%, #1c6c1c); border-radius: 0 12px 12px 0 / 0 14px 14px 0; color: #fff; box-shadow: inset -1px 0 2px #0a3a0a; }
.start em { font: italic bold 16px "Liberation Sans", Arial, sans-serif; text-shadow: 1px 1px 1px #104010; letter-spacing: .4px; }
.task { flex: none; display: flex; align-items: center; height: 24px; width: 157px; border-radius: 3px; font-size: 11.500px; white-space: nowrap; }
.nt { position: relative; margin-left: 10px; padding-left: 10px; background: linear-gradient(#5e6c7c, #7c8894); border: 1px solid #505868; color: #f0f0f4; gap: 3px; font-size: 11px; }
.nt b { color: #ff6030; font-size: 12px; }
.nt span { margin-left: 2px; }
.tri { position: absolute; right: 2px; top: 10px; border: 4px solid transparent; border-top: 4px solid #303040; border-bottom: 0; }
.sk { margin-left: 2px; padding-left: 8px; gap: 4px; background: linear-gradient(#ffc070, #fca040 50%, #f8a848); border: 1px solid #c87818; color: #302010; letter-spacing: .2px; }
.skype { width: 15px; height: 15px; border-radius: 50%; background: #18a0e8; color: #fff; font: bold 12px/15px "Liberation Sans", sans-serif; text-align: center; letter-spacing: 0; }
.tray { margin-left: auto; height: 29px; width: 129px; display: flex; align-items: center; gap: 2px; background: linear-gradient(#e8e8f4, #c8c8d8 20%, #d8d8e4 70%, #b8b8c8); border-left: 1px solid #808090; position: relative; }
.tray .back { margin-left: -9px; }
.tray time { margin-left: 5px; font-size: 11.500px; color: #101018; }
```
